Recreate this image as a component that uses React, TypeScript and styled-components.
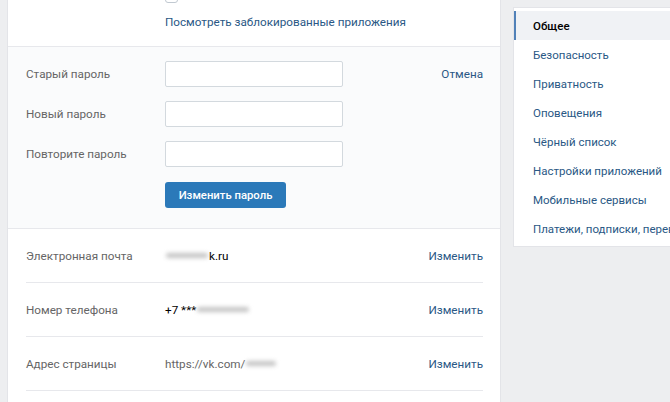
import React from 'react';
import styled, { createGlobalStyle } from 'styled-components';

const GlobalStyle = createGlobalStyle`
  html, body {
    margin: 0;
    padding: 0;
    background: #edeef0;
    overflow: hidden;
  }
  body {
    font-family: Roboto, "Open Sans", "Liberation Sans", sans-serif;
    font-size: 11.7px;
    color: #000;
  }
`;

const Page = styled.div`
  display: flex;
  align-items: flex-start;
  gap: 14px;
  padding-left: 8px;
  width: 720px;
  height: 402px;
  overflow: hidden;
`;

const MainCard = styled.div`
  width: 492px;
  flex-shrink: 0;
  background: #fff;
  box-shadow: 0 0 0 1px #e3e4e8;
  min-height: 420px;
`;

const TopSection = styled.div`
  padding: 0 17px 0 157px;
  height: 46px;
  overflow: hidden;
`;

const CheckRow = styled.div`
  display: flex;
  align-items: center;
  gap: 8px;
  height: 14px;
  margin-top: -11px;
  white-space: nowrap;
`;

const CheckBox = styled.span`
  width: 13px;
  height: 13px;
  border: 1px solid #c1c9d1;
  border-radius: 3px;
  box-sizing: border-box;
  flex-shrink: 0;
`;

const CheckText = styled.span`
  color: #000;
  position: relative;
  top: -6px;
`;

const Link = styled.a`
  display: block;
  margin-top: 11px;
  color: #2a5885;
  text-decoration: none;
  line-height: 16px;
`;

const PasswordSection = styled.div`
  background: #fafbfc;
  border-top: 1px solid #e7e8ec;
  border-bottom: 1px solid #e7e8ec;
  padding: 14px 17px 21px 18px;
  display: flex;
  flex-direction: column;
  gap: 14px;
`;

const FormRow = styled.div`
  display: grid;
  grid-template-columns: 139px 178px 1fr;
  align-items: center;
  height: 26px;
`;

const Label = styled.span`
  color: #656565;
`;

const Input = styled.input`
  width: 178px;
  height: 26px;
  box-sizing: border-box;
  border: 1px solid #d3d9de;
  border-radius: 2px;
  background: #fff;
  outline: none;
  padding: 4px 8px;
  font-family: inherit;
  font-size: 12px;
`;

const Cancel = styled.a`
  justify-self: end;
  color: #2a5885;
  text-decoration: none;
`;

const Button = styled.button`
  width: 121px;
  height: 26px;
  margin-top: 1px;
  border: none;
  border-radius: 3px;
  background: #2b79b9;
  color: #fff;
  font-family: inherit;
  font-size: 11.3px;
  font-weight: 500;
  cursor: pointer;
`;

const InfoRow = styled.div`
  display: grid;
  grid-template-columns: 139px 1fr auto;
  align-items: center;
  height: 53px;
  margin: 0 17px 0 18px;
  border-bottom: 1px solid #e7e8ec;
`;

const Value = styled.span<{ $muted?: boolean }>`
  color: ${(p) => (p.$muted ? '#656565' : '#000')};
  display: flex;
  align-items: center;
`;

const Blur = styled.span<{ $w: number }>`
  display: inline-block;
  width: ${(p) => p.$w}px;
  height: 5px;
  background: #c4c4c4;
  border-radius: 3px;
  filter: blur(2px);
  margin: 0 1px;
`;

const Change = styled.a`
  color: #2a5885;
  text-decoration: none;
`;

const MenuCard = styled.div`
  margin-top: 8px;
  width: 200px;
  flex-shrink: 0;
  background: #fff;
  box-shadow: 0 0 0 1px #e3e4e8;
  padding: 3px 0;
`;

const MenuItem = styled.div<{ $active?: boolean }>`
  height: 29px;
  display: flex;
  align-items: center;
  padding-left: ${(p) => (p.$active ? '17px' : '19px')};
  border-left: ${(p) => (p.$active ? '2px solid #5181b8' : 'none')};
  background: ${(p) => (p.$active ? '#f0f2f5' : 'transparent')};
  color: ${(p) => (p.$active ? '#000' : '#2a5885')};
  font-weight: ${(p) => (p.$active ? 500 : 400)};
  font-size: 11.5px;
  white-space: nowrap;
`;

const menu = [
  'Общее',
  'Безопасность',
  'Приватность',
  'Оповещения',
  'Чёрный список',
  'Настройки приложений',
  'Мобильные сервисы',
  'Платежи, подписки, переводы',
];

const App: React.FC = () => {
  return (
    <>
      <GlobalStyle />
      <Page>
        <MainCard>
          <TopSection>
            <CheckRow>
              <CheckBox />
              <CheckText>Разрешить доступ к моей странице другим приложениям</CheckText>
            </CheckRow>
            <Link href="#">Посмотреть заблокированные приложения</Link>
          </TopSection>

          <PasswordSection>
            <FormRow>
              <Label>Старый пароль</Label>
              <Input type="password" />
              <Cancel href="#">Отмена</Cancel>
            </FormRow>
            <FormRow>
              <Label>Новый пароль</Label>
              <Input type="password" />
            </FormRow>
            <FormRow>
              <Label>Повторите пароль</Label>
              <Input type="password" />
            </FormRow>
            <FormRow>
              <span />
              <Button>Изменить пароль</Button>
            </FormRow>
          </PasswordSection>

          <InfoRow>
            <Label>Электронная почта</Label>
            <Value>
              <Blur $w={42} />
              k.ru
            </Value>
            <Change href="#">Изменить</Change>
          </InfoRow>
          <InfoRow>
            <Label>Номер телефона</Label>
            <Value>
              +7 ***
              <Blur $w={52} />
            </Value>
            <Change href="#">Изменить</Change>
          </InfoRow>
          <InfoRow>
            <Label>Адрес страницы</Label>
            <Value $muted>
              https://vk.com/
              <Blur $w={30} />
            </Value>
            <Change href="#">Изменить</Change>
          </InfoRow>
        </MainCard>

        <MenuCard>
          {menu.map((item, i) => (
            <MenuItem key={item} $active={i === 0}>
              {item}
            </MenuItem>
          ))}
        </MenuCard>
      </Page>
    </>
  );
};

export default App;
